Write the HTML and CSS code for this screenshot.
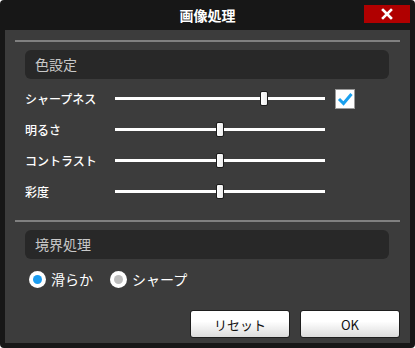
FILE: index.html
```html
<!DOCTYPE html>
<html lang="ja">
<head>
  <meta charset="UTF-8">
  <title>画像処理</title>
  <link rel="stylesheet" href="styles.css">
</head>
<body>
  <div class="window">
    <div class="titlebar">
      <span></span>
      <h1 class="title">画像処理</h1>
      <button class="close" type="button" aria-label="閉じる">
        <svg width="12" height="12" viewBox="0 0 12 12"><path d="M2 2 L10 10 M10 2 L2 10" stroke="#fff" stroke-width="2.6" stroke-linecap="square"/></svg>
      </button>
    </div>

    <div class="content">
      <hr class="sep">
      <div class="group-head">色設定</div>

      <div class="rows">
        <div class="row">
          <label class="row-label" for="sharp">シャープネス</label>
          <input class="slider" type="range" id="sharp" min="0" max="100" value="72">
          <span class="check">
            <svg width="18" height="18" viewBox="0 0 18 18"><path d="M3 9 L7.5 13.5 L15.5 4" fill="none" stroke="#1aa0ee" stroke-width="3"/></svg>
          </span>
        </div>
        <div class="row">
          <label class="row-label" for="bright">明るさ</label>
          <input class="slider" type="range" id="bright" min="0" max="100" value="50">
        </div>
        <div class="row">
          <label class="row-label" for="contrast">コントラスト</label>
          <input class="slider" type="range" id="contrast" min="0" max="100" value="50">
        </div>
        <div class="row">
          <label class="row-label" for="sat">彩度</label>
          <input class="slider" type="range" id="sat" min="0" max="100" value="50">
        </div>
      </div>

      <hr class="sep sep2">
      <div class="group-head">境界処理</div>

      <div class="radios">
        <label class="radio"><span class="dot on"></span>滑らか</label>
        <label class="radio"><span class="dot"></span>シャープ</label>
      </div>

      <div class="buttons">
        <button class="btn" type="button">リセット</button>
        <button class="btn" type="button">OK</button>
      </div>
    </div>
  </div>
</body>
</html>
```

FILE: styles.css
```css
body {
  margin: 0;
  background: #fff;
  font-family: "Noto Sans CJK JP", "Liberation Sans", sans-serif;
}
.window {
  width: 415px;
  height: 348px;
  box-sizing: border-box;
  background: #171717;
  border-radius: 4px;
  padding: 0 5px 5px;
  display: flex;
  flex-direction: column;
}
.titlebar {
  height: 30px;
  display: grid;
  grid-template-columns: 1fr auto 1fr;
  align-items: start;
}
.title {
  margin: 0;
  padding-top: 5px;
  color: #fff;
  font-size: 14px;
  font-weight: bold;
  line-height: 20px;
}
.close {
  justify-self: end;
  margin-top: 5px;
  width: 46px;
  height: 18px;
  border: none;
  padding: 0;
  background: #b00000;
  display: flex;
  align-items: center;
  justify-content: center;
}
.content {
  flex: 1;
  background: #3c3c3c;
  padding: 10px 10px 5px;
  display: flex;
  flex-direction: column;
}
.sep {
  margin: 0;
  border: none;
  height: 2px;
  background: #808080;
}
.sep2 {
  margin-top: 13px;
}
.group-head {
  margin: 8px 11px 0 10px;
  height: 29px;
  box-sizing: border-box;
  background: #282828;
  border-radius: 6px;
  color: #c8c8c8;
  font-size: 14px;
  line-height: 29px;
  padding-left: 10px;
}
.rows {
  margin-top: 4px;
  display: flex;
  flex-direction: column;
}
.row {
  height: 31px;
  display: flex;
  align-items: center;
  padding-left: 10px;
}
.row-label {
  width: 90px;
  color: #fff;
  font-size: 12px;
  font-weight: 500;
}
.slider {
  -webkit-appearance: none;
  appearance: none;
  margin: 0;
  width: 210px;
  height: 16px;
  background: transparent;
}
.slider::-webkit-slider-runnable-track {
  height: 3px;
  background: #fff;
}
.slider::-webkit-slider-thumb {
  -webkit-appearance: none;
  width: 8px;
  height: 15px;
  margin-top: -6px;
  box-sizing: border-box;
  border: 1px solid #1c1c1c;
  border-radius: 2px;
  background: linear-gradient(to right, #fff, #ececec);
}
.check {
  margin-left: 10px;
  width: 20px;
  height: 20px;
  box-sizing: border-box;
  background: #fff;
  border: 1px solid #9a9a9a;
  display: flex;
  align-items: center;
  justify-content: center;
}
.radios {
  margin-top: 9px;
  height: 22px;
  padding-left: 14px;
  display: flex;
  align-items: center;
  gap: 17px;
}
.radio {
  display: flex;
  align-items: center;
  gap: 5px;
  color: #fff;
  font-size: 14px;
}
.dot {
  width: 17px;
  height: 17px;
  box-sizing: border-box;
  border-radius: 50%;
  background: #fff;
  display: flex;
  align-items: center;
  justify-content: center;
}
.dot::after {
  content: "";
  width: 9px;
  height: 9px;
  border-radius: 50%;
  background: #bdbdbd;
}
.dot.on::after {
  background: #1a9cf0;
}
.buttons {
  margin-top: 20px;
  display: flex;
  justify-content: flex-end;
  gap: 10px;
}
.btn {
  width: 100px;
  height: 28px;
  border: 1px solid #1e1e1e;
  border-radius: 3px;
  background: linear-gradient(#fff 40%, #dcdcdc);
  color: #111;
  font-family: "Noto Sans CJK JP", "Liberation Sans", sans-serif;
  font-size: 13px;
  padding: 0;
}
```
